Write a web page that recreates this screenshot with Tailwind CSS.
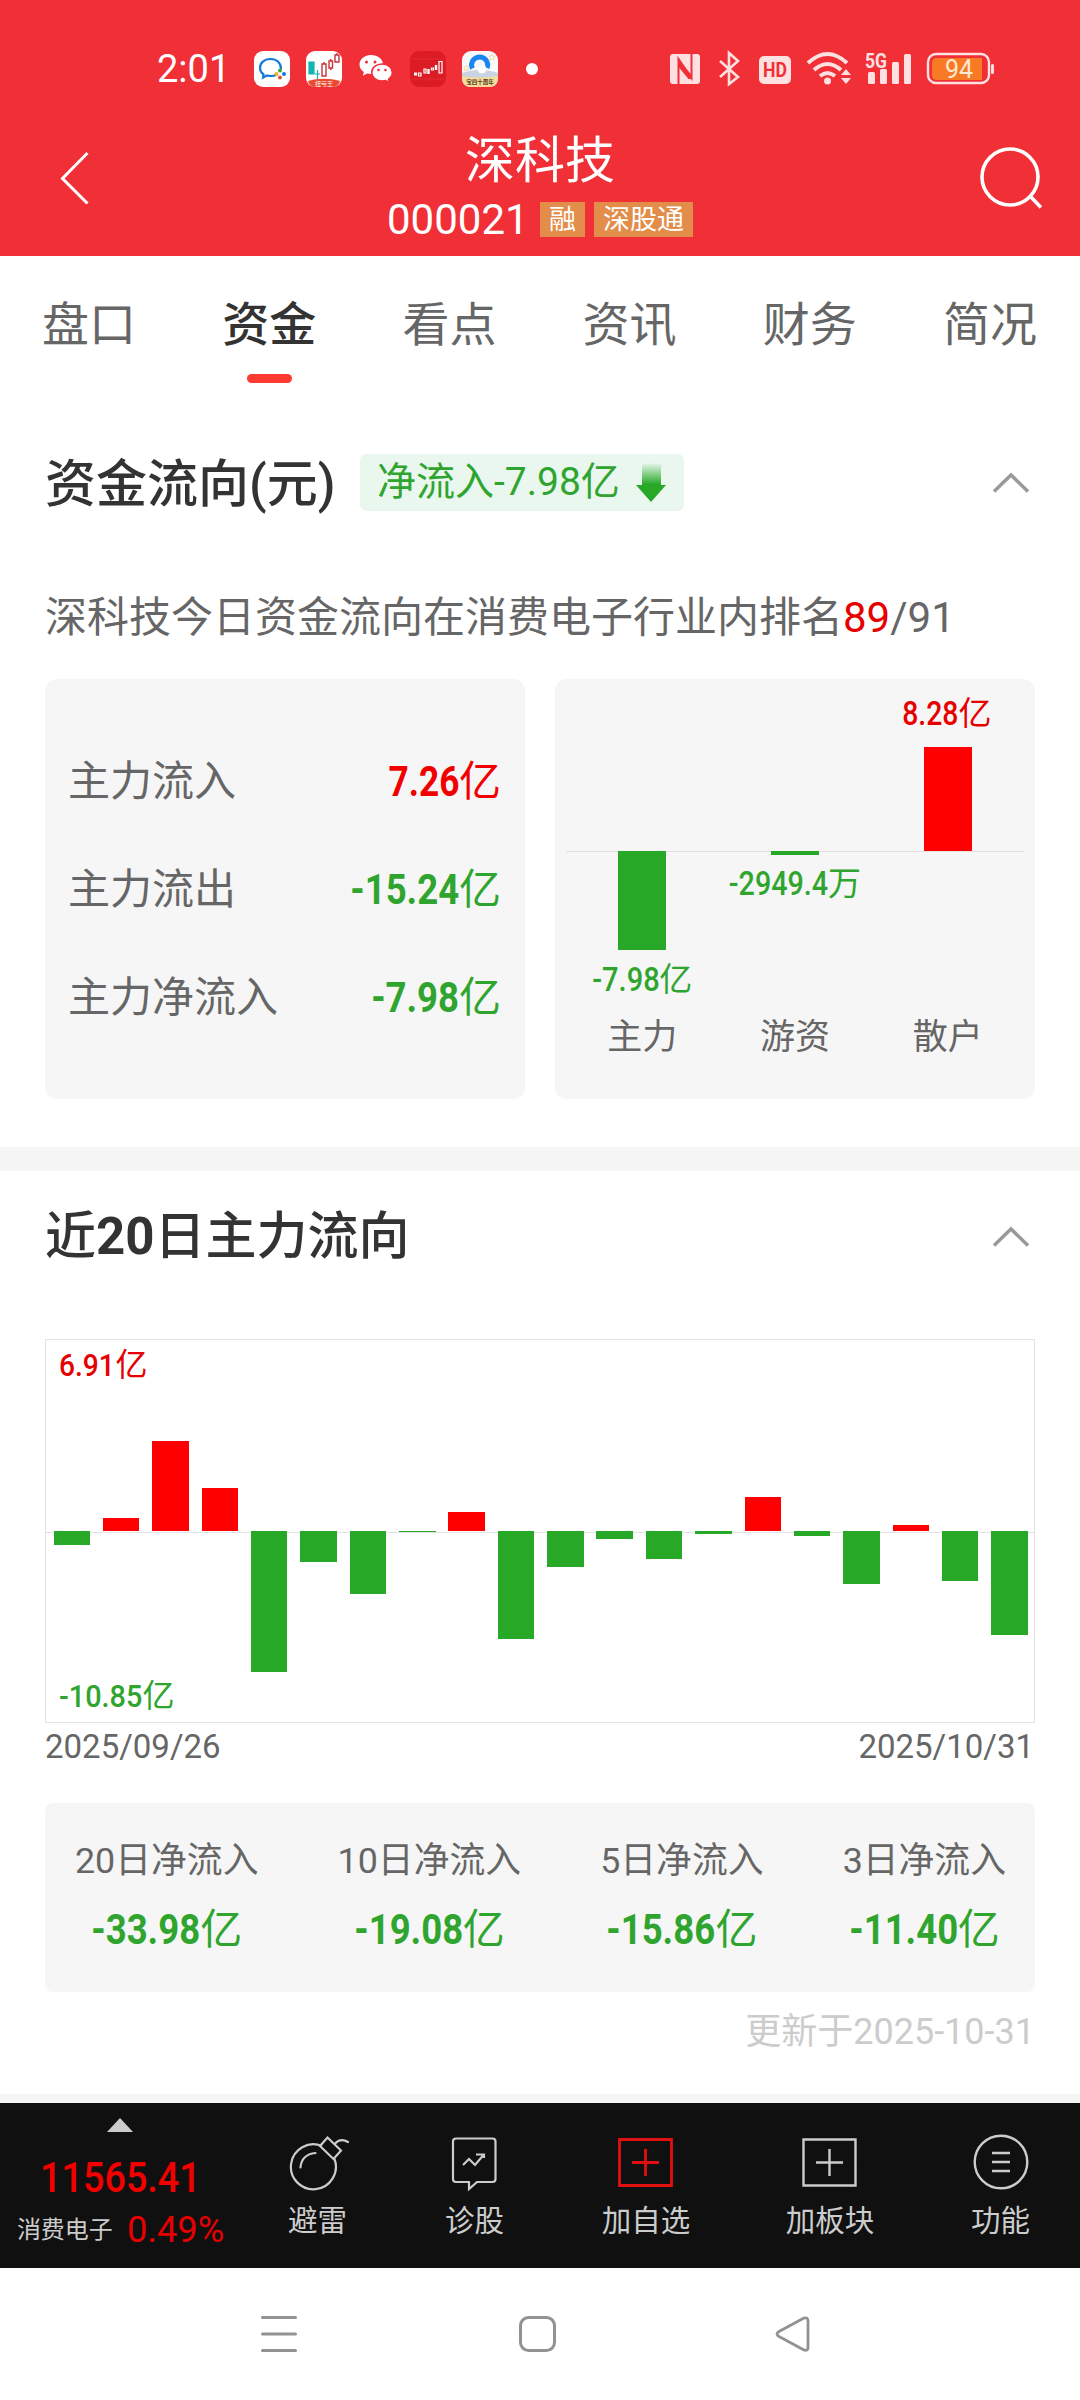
<!DOCTYPE html>
<html lang="zh-CN">
<head>
    <meta charset="UTF-8">
    <meta name="viewport" content="width=device-width, initial-scale=1.0">
    <title>深科技 - 资金</title>
    <script src="https://cdn.jsdelivr.net/npm/@tailwindcss/browser@4"></script>
</head>
<body class="w-[1080px] h-[2400px] overflow-hidden bg-white text-[#666] font-['Roboto','Noto_Sans_CJK_SC',sans-serif]">

    <header class="h-[256px] bg-[#f12f37] text-white">
        <!-- 状态栏 -->
        <div class="h-[136px] pt-[2px] pl-[157px] pr-[86px] flex items-center justify-between">
            <div class="flex items-center">
                <span class="w-[97px] text-[38px] leading-none">2:01</span>
                <svg class="w-9 h-9" viewBox="0 0 36 36" fill="none">
                    <rect width="36" height="36" rx="9" fill="#fff"/>
                    <path d="M27 18c0-6-4-10-10.500-10S6 12 6 17c0 3 1.500 5 3.500 6.500L9 26.500l4-2c4 .8 7 .6 9-.5" stroke="#1479d8" stroke-width="2.200"/>
                    <circle cx="26" cy="19.500" r="2" fill="#38a838"/><circle cx="30" cy="23" r="2" fill="#1479d8"/>
                    <circle cx="26" cy="26.500" r="2" fill="#e5532d"/><circle cx="22.500" cy="23" r="2" fill="#f2b01e"/>
                </svg>
                <svg class="w-9 h-9 ml-4" viewBox="0 0 36 36" fill="none">
                    <rect width="36" height="36" rx="9" fill="#fff"/>
                    <path d="M3 11h5v12H3zM11.500 19v10M9 23h5" fill="#12b5b0" stroke="#12b5b0" stroke-width="1.200"/>
                    <path d="M16 13h4v12h-4zM18 11v2M23 10h3.500v7H23zM24.700 8v2M24.700 17v2M29 4h4v7h-4zM31 2v2" stroke="#c8343a" stroke-width="1.400"/>
                    <path d="M2 30c10-3 22-3 32 0-1 4-4 6-8 6H10c-4 0-7-2-8-6z" fill="#ea4a30"/>
                    <text x="18" y="34.500" text-anchor="middle" font-size="6" fill="#fff">扭亏王</text>
                </svg>
                <svg class="w-9 h-9 ml-4" viewBox="0 0 36 36">
                    <path d="M13 4C6.500 4 1.500 8.300 1.500 13.500c0 3 1.700 5.700 4.300 7.500l-1 3.800 4.300-2.200c1.300.3 2.600.5 3.900.5C19.600 23 25 19 25 13.500S19.500 4 13 4z" fill="#fff"/>
                    <path d="M24 13c-5.800 0-10.300 3.700-10.300 8.400S18.200 30 24 30c1.200 0 2.400-.2 3.500-.5l4 2-1-3.400c2.300-1.600 3.800-4 3.800-6.700C34.300 16.700 29.800 13 24 13z" fill="#fff" stroke="#f12f37" stroke-width="1.500"/>
                    <g fill="#f12f37"><circle cx="8.500" cy="11" r="1.500"/><circle cx="17" cy="11" r="1.500"/><circle cx="20.500" cy="19" r="1.300"/><circle cx="27.500" cy="19" r="1.300"/></g>
                </svg>
                <svg class="w-9 h-9 ml-4" viewBox="0 0 36 36" fill="none">
                    <rect width="36" height="36" rx="9" fill="#dc1c24"/>
                    <path d="M1 8h34M1 28h34" stroke="#e8383e" stroke-width=".6"/>
                    <path d="M4 23h3" stroke="#fff" stroke-width="3"/>
                    <path d="M8.500 22h2.500v3H8.500zM14 18h2v4h-2zM21.500 17h2v2h-2zM29 10.500h3v11.500h-3z" stroke="#fff" stroke-width="1.200"/>
                    <path d="M18.500 18v5M26 14v5" stroke="#fff" stroke-width="2.400"/>
                </svg>
                <svg class="w-9 h-9 ml-4" viewBox="0 0 36 36" fill="none">
                    <rect width="36" height="36" rx="9" fill="#f7f9fc"/>
                    <path d="M0 22c10-4 26-4 36 0v5H0z" fill="#c9d3e2"/>
                    <path d="M0 25c12 2 24 2 36 0v2c0 6-3 9-9 9H9c-6 0-9-3-9-9z" fill="#f3dc9c"/>
                    <path d="M10.500 17.500a8 8 0 1 1 14.500-.5" stroke="#1a86f0" stroke-width="5"/>
                    <circle cx="20" cy="18" r="4.500" fill="#fff"/>
                    <path d="M30 3l1 2 2 .5-1.500 1.500.5 2-2-1-2 1 .3-2L27 5.500l2-.5zM4.500 14l.8 2 2 .3-1.500 1.500.3 2-1.800-1-1.800 1 .3-2L1.500 16.300l2-.3z" stroke="#f3d48a" stroke-width=".8"/>
                    <text x="18" y="33" text-anchor="middle" font-size="5.500" font-weight="700" fill="#54401c">宝四十周年</text>
                </svg>
                <span class="w-3 h-3 ml-7 rounded-full bg-white"></span>
            </div>
            <svg class="w-[326px] h-9 text-[#ffe0e0] overflow-visible" viewBox="0 0 326 36" fill="none">
                <g fill="currentColor">
                    <rect x="2" y="3" width="30" height="30" rx="3"/>
                    <rect x="91" y="5" width="32" height="28" rx="5"/>
                    <rect x="200" y="21" width="7" height="12" rx="1.500"/>
                    <rect x="212" y="18" width="7" height="15" rx="1.500"/>
                    <rect x="224" y="11" width="7" height="22" rx="1.500"/>
                    <rect x="236" y="3" width="7" height="30" rx="1.500"/>
                    <circle cx="159.500" cy="30" r="3.500"/>
                    <path d="M173 24l5-6 5 6zM173 27l5 6 5-6z"/>
                    <rect x="323" y="13" width="3" height="10" rx="1.500"/>
                </g>
                <path d="M10.500 33V8L23.500 27V3" stroke="#f12f37" stroke-width="2"/>
                <path d="M10.500 8v8l10 12h3v-4" fill="#f12f37"/>
                <path d="M52 10l18 16-9 7V2l9 8-18 16" stroke="currentColor" stroke-width="2.600"/>
                <text x="95" y="26" font-size="20" font-weight="700" fill="#f12f37" textLength="24" lengthAdjust="spacingAndGlyphs">HD</text>
                <path d="M140 12q19.500-18 39 0M146 19q13.500-12 27 0M152 25q7.500-6 15 0" stroke="currentColor" stroke-width="4"/>
                <text x="197" y="17" font-size="21" font-weight="700" fill="currentColor" textLength="22" lengthAdjust="spacingAndGlyphs">5G</text>
                <rect x="260" y="3" width="61" height="29" rx="8" stroke="currentColor" stroke-width="2.400"/>
                <path d="M269 7h45v22h-45q-5 0-5-5v-12q0-5 5-5z" fill="#f97a25"/>
                <text x="291" y="26.500" text-anchor="middle" font-size="25" fill="#ffe9d0">94</text>
            </svg>
        </div>
        <!-- 标题栏 -->
        <div class="h-[120px] px-[38px] flex justify-between">
            <svg class="w-[70px] h-[80px]" viewBox="0 0 70 80" fill="none" stroke="#fff" stroke-width="3"><path d="M49.500 17L24.500 42.500l25 25"/></svg>
            <div class="flex flex-col items-center">
                <h1 class="text-[50px] leading-[50px]">深科技</h1>
                <div class="mt-[9px] flex items-center text-[27px]">
                    <span class="text-[42px] leading-[50px] w-[153px]">000021</span>
                    <span class="w-[45px] h-[35px] leading-[37px] text-center bg-[#e38d4b] -mt-px">融</span>
                    <span class="w-[99px] h-[35px] leading-[37px] text-center bg-[#e38d4b] ml-[9px] -mt-px">深股通</span>
                </div>
            </div>
            <svg class="w-[70px] h-[80px]" viewBox="0 0 70 80" fill="none" stroke="#fff" stroke-width="3.600"><circle cx="38" cy="41" r="28"/><path d="M58.500 60.500l10.500 11"/></svg>
        </div>
    </header>

    <nav class="h-[154px] grid grid-cols-6 text-center text-[47px] leading-[70px] pt-[34px] -ml-px">
        <a>盘口</a>
        <a class="text-[#333] font-medium flex flex-col items-center">资金<span class="w-[45px] h-[9px] mt-[14px] rounded-full bg-[#ff3a30]"></span></a>
        <a>看点</a>
        <a>资讯</a>
        <a>财务</a>
        <a>简况</a>
    </nav>

    <main>
        <section class="h-[737px] px-[45px] pt-[44px]">
            <div class="h-[57px] flex items-center">
                <h2 class="text-[51px] leading-none text-[#333] font-medium w-[315px] whitespace-nowrap pt-[3px]">资金流向(元)</h2>
                <div class="w-[324px] h-[57px] rounded-md bg-[#e9f7ee] flex items-center justify-between pl-[17px] pr-[18px] text-[39px] text-[#2fa52f]">
                    <span class="whitespace-nowrap leading-none -mt-px">净流入-7.98亿</span>
                    <svg class="w-[30px] h-10" viewBox="0 0 30 40">
                        <defs><linearGradient id="fade" x1="0" y1="0" x2="0" y2="1"><stop offset="0" stop-color="#27a827" stop-opacity="0"/><stop offset=".55" stop-color="#27a827"/></linearGradient></defs>
                        <path d="M6 0h19v22h5L15 39 0 22h6z" fill="url(#fade)"/>
                    </svg>
                </div>
                <svg class="w-[38px] h-6 ml-auto mr-[5px] mt-px" viewBox="0 0 38 24" fill="none" stroke="#999" stroke-width="3.500"><path d="M2 20.500L19 4l17 16.500"/></svg>
            </div>
            <p class="mt-[77px] text-[42px] leading-[60px] whitespace-nowrap">深科技今日资金流向在消费电子行业内排名<span class="text-[#e60000]">89</span>/91</p>
            <div class="mt-[31px] grid grid-cols-2 gap-[30px]">
                <div class="h-[420px] rounded-xl bg-[#f6f6f6] pl-[23px] pr-[24px] pt-[49px] text-[42px] leading-[108px]">
                    <div class="flex justify-between"><span>主力流入</span><span class="text-[#f20000] flex"><b class="origin-right scale-x-[.84]">7.26</b>亿</span></div>
                    <div class="flex justify-between"><span>主力流出</span><span class="text-[#2fa52f] flex"><b class="origin-right scale-x-[.87]">-15.24</b>亿</span></div>
                    <div class="flex justify-between"><span>主力净流入</span><span class="text-[#2fa52f] flex"><b class="origin-right scale-x-[.87]">-7.98</b>亿</span></div>
                </div>
                <div class="h-[420px] rounded-xl bg-[#f6f6f6] px-[11px] relative">
                    <div class="absolute left-[11px] right-[11px] top-[172px] h-px bg-[#e2e2e2]"></div>
                    <div class="relative grid grid-cols-3 text-[33px] leading-10 text-[#2fa52f]">
                        <div class="h-[336px] pt-[172px] flex flex-col items-center">
                            <div class="w-12 h-[99px] bg-[#27a827]"></div>
                            <div class="mt-[10px] flex"><b class="font-medium origin-right scale-x-[.88] -ml-[10px]">-7.98</b>亿</div>
                        </div>
                        <div class="h-[336px] pt-[172px] flex flex-col items-center">
                            <div class="w-12 h-1 bg-[#27a827]"></div>
                            <div class="mt-[9px] flex"><b class="font-medium origin-right scale-x-[.87] -ml-[15px]">-2949.4</b>万</div>
                        </div>
                        <div class="h-[336px] pt-[15px] flex flex-col items-center text-[#e60000]">
                            <div class="flex"><b class="font-medium origin-right scale-x-[.86] -ml-[11px]">8.28</b>亿</div>
                            <div class="mt-[13px] w-12 h-[104px] bg-[#f00]"></div>
                        </div>
                    </div>
                    <div class="relative grid grid-cols-3 text-center text-[35px] leading-[45px] text-[#666]"><span>主力</span><span>游资</span><span>散户</span></div>
                </div>
            </div>
        </section>

        <div class="h-[24px] bg-[#f5f5f5]"></div>

        <section class="h-[923px] px-[45px] pt-[37px]">
            <div class="h-[57px] flex items-center justify-between">
                <h2 class="text-[51px] leading-none text-[#333] font-medium">近<b>20</b>日主力流向</h2>
                <svg class="w-[38px] h-6 mr-[5px]" viewBox="0 0 38 24" fill="none" stroke="#999" stroke-width="3.500"><path d="M2 20.500L19 4l17 16.500"/></svg>
            </div>
            <div class="mt-[74px] h-[384px] border border-[#e2e2e2] relative text-[32px] leading-10">
                <div class="absolute left-0 right-0 top-[192px] h-px bg-[#e2e2e2]"></div>
                <div id="bars" class="absolute left-[7.500px] top-0 h-full flex gap-[12.860px]"></div>
                <div class="absolute left-[13px] top-[5px] flex text-[#e60000]"><b class="font-medium origin-left scale-x-[.88] -mr-[7px]">6.91</b>亿</div>
                <div class="absolute left-[13px] bottom-[6px] flex text-[#2fa52f]"><b class="font-medium origin-left scale-x-[.9] -mr-[9px]">-10.85</b>亿</div>
            </div>
            <div class="mt-[4px] flex justify-between text-[33px] leading-10 pr-px"><span>2025/09/26</span><span>2025/10/31</span></div>
            <div class="mt-[36px] h-[189px] rounded-lg bg-[#f6f6f6] pl-[30px] pr-[29px] pt-[30px] flex justify-between text-center text-[35.800px] leading-[56px]">
                <div>20日净流入<div class="mt-[13px] flex justify-center text-[42px] text-[#2fa52f]"><b class="origin-right scale-x-[.87] -ml-[16px]">-33.98</b>亿</div></div>
                <div>10日净流入<div class="mt-[13px] flex justify-center text-[42px] text-[#2fa52f]"><b class="origin-right scale-x-[.87] -ml-[16px]">-19.08</b>亿</div></div>
                <div>5日净流入<div class="mt-[13px] flex justify-center text-[42px] text-[#2fa52f]"><b class="origin-right scale-x-[.87] -ml-[16px]">-15.86</b>亿</div></div>
                <div>3日净流入<div class="mt-[13px] flex justify-center text-[42px] text-[#2fa52f]"><b class="origin-right scale-x-[.87] -ml-[16px]">-11.40</b>亿</div></div>
            </div>
            <p class="mt-[15px] text-right text-[36px] leading-[50px] text-[#ccc]">更新于2025-10-31</p>
        </section>
    </main>

    <div class="h-[9px] bg-[#f5f5f5]"></div>

    <!-- 底部工具栏 -->
    <div class="h-[165px] bg-[#101010] text-[#ccc] text-[29.500px] leading-10 text-center flex">
        <div class="w-[240px] pt-[15px] flex flex-col items-center">
            <svg class="w-[26px] h-[14px]" viewBox="0 0 26 14" fill="#ccc"><path d="M13 0l13 14H0z"/></svg>
            <div class="mt-[21px] text-[42px] leading-[50px] font-medium text-[#f20000] scale-x-[.9]">11565.41</div>
            <div class="flex items-center text-[24px] mt-[7px] pl-[3px]"><span class="w-[110px] text-left">消费电子</span><span class="text-[37px] text-[#e60000] origin-left scale-x-[.98]">0.49%</span></div>
        </div>
        <div class="w-[154px] pt-[29px] flex flex-col items-center">
            <svg class="w-[60px] h-[60px] ml-[3px]" viewBox="0 0 60 60" fill="none" stroke="#ccc" stroke-width="2.200">
                <path d="M33 14A22.500 22.500 0 1 0 45.500 27"/><path d="M11.500 35.500q1-13 15-14.500" stroke-linecap="round"/>
                <path d="M31 14l7.500-8.500L52 18.500 44.500 27zM45.500 12q6-6.500 13.500-2" stroke-linecap="round"/>
            </svg>
            <span class="mt-[9px] ml-px">避雷</span>
        </div>
        <div class="w-[161px] pt-[29px] flex flex-col items-center">
            <svg class="w-[60px] h-[60px]" viewBox="0 0 60 60" fill="none" stroke="#ccc" stroke-width="2.200">
                <path d="M11 6.500h36.500q3 0 3 3V47q0 3-3 3H32l-8 7v-7H11q-3 0-3-3V9.500q0-3 3-3z"/><path d="M18 33l6-6 6 6 8.500-10M31 22.500h8V26"/>
            </svg>
            <span class="mt-[9px]">诊股</span>
        </div>
        <div class="w-[182px] pt-[29px] flex flex-col items-center">
            <svg class="w-[60px] h-[60px]" viewBox="0 0 60 60" fill="none" stroke="#e01010" stroke-width="2.800"><path d="M3.500 7.500h52v46h-52zM16 30.500h27M29.500 17v27"/></svg>
            <span class="mt-[9px]">加自选</span>
        </div>
        <div class="w-[186px] pt-[29px] flex flex-col items-center">
            <svg class="w-[60px] h-[60px]" viewBox="0 0 60 60" fill="none" stroke="#ccc" stroke-width="2.400"><path d="M3.500 7.500h52v46h-52zM16 30.500h27M29.500 17v27"/></svg>
            <span class="mt-[9px]">加板块</span>
        </div>
        <div class="w-[155px] pt-[29px] flex flex-col items-center">
            <svg class="w-[60px] h-[60px]" viewBox="0 0 60 60" fill="none" stroke="#ccc" stroke-width="2.400"><circle cx="30" cy="30" r="26.300"/><path d="M21 21h18M21 30h18M21 39h18"/></svg>
            <span class="mt-[9px]">功能</span>
        </div>
    </div>

    <!-- 系统导航键 -->
    <div class="h-[132px] flex items-center pl-[259px] pr-[265px] justify-between">
        <svg class="w-10 h-10" viewBox="0 0 40 40" stroke="#929292" stroke-width="3" stroke-linecap="round"><path d="M3.500 3.500h33M3.500 20h33M3.500 36.500h33"/></svg>
        <svg class="w-10 h-10" viewBox="0 0 40 40" fill="none" stroke="#929292" stroke-width="3"><rect x="3.500" y="3.500" width="34" height="33" rx="8"/></svg>
        <svg class="w-10 h-10" viewBox="0 0 40 40" fill="none" stroke="#929292" stroke-width="2.800" stroke-linejoin="round"><path d="M4 17.500L29 4q4-1 4 3v27q0 3-4 2L4 22.500q-4-2.500 0-5z"/></svg>
    </div>

    <script>
        // 近20日主力净流入柱高(px),正数向上,负数向下
        const flows = [-14, 13, 90, 43, -141, -31, -63, -1, 19, -108, -36, -8, -28, -3, 34, -5, -53, 6, -50, -104];
        document.getElementById('bars').innerHTML = flows.map(v =>
            `<div class="w-[36.500px] h-full"><div class="${v > 0 ? 'bg-[#f00]' : 'bg-[#27a827]'}" style="height:${Math.abs(v)}px;margin-top:${191 - Math.max(v, 0)}px"></div></div>`
        ).join('');
    </script>
</body>
</html>
